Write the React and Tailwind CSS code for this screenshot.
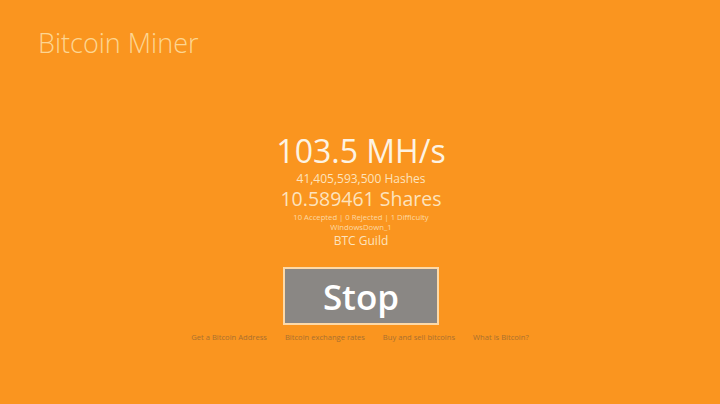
import React from 'react';

const links = ['Get a Bitcoin Address', 'Bitcoin exchange rates', 'Buy and sell bitcoins', 'What is Bitcoin?'];

const App = () => {
  return (
    <div className="flex h-[404px] w-[720px] flex-col overflow-hidden bg-[#fa951f] font-['Open_Sans',sans-serif] text-[#fdf3e3]">
      <header className="h-[133px] pl-[38px] pt-[24px]">
        <h1 className="text-[27px] font-light leading-[38px] text-[#fdd592]">Bitcoin Miner</h1>
      </header>

      <main className="flex flex-col items-center pl-[2px]">
        <div className="text-[32px] leading-[36px]">103.5 MH/s</div>
        <div className="mt-[2px] text-[12px] leading-[16px] text-[#fde3bd]">41,405,593,500 Hashes</div>
        <div className="text-[19.5px] leading-[24px] text-[#fde3bd]">10.589461 Shares</div>
        <div className="mt-[1px] text-[7.7px] leading-[10px] text-[#fdd9a5]">10 Accepted | 0 Rejected | 1 Difficulty</div>
        <div className="text-[7.7px] leading-[10px] text-[#fdd9a5]">WindowsDown_1</div>
        <div className="text-[12px] leading-[17px] text-[#fde3bd]">BTC Guild</div>

        <button className="mt-[18px] flex h-[58px] w-[156px] items-center justify-center border-2 border-[#fcd9a8] bg-[#8a8784] pt-[3px] text-[35px] font-semibold text-white">
          Stop
        </button>

        <nav className="mt-[6px] flex gap-[18px] pr-[2px] text-[7.6px] leading-[12px] text-[#a9702f]">
          {links.map(link => (
            <a key={link}>{link}</a>
          ))}
        </nav>
      </main>
    </div>
  );
};

export default App;
